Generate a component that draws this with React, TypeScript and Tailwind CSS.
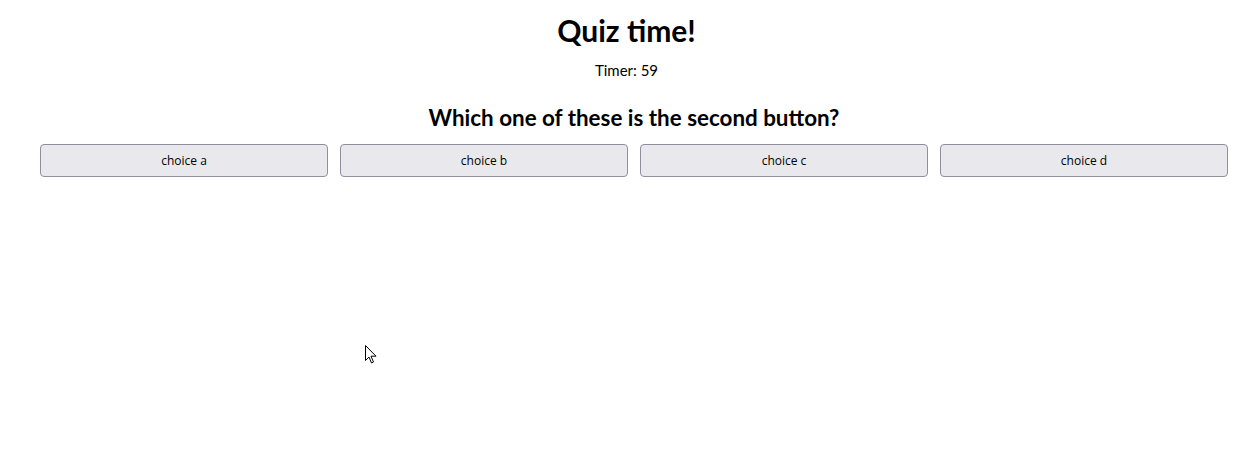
export default function App() {
  const choices = ['choice a', 'choice b', 'choice c', 'choice d'];

  return (
    <main className="relative min-h-[462px] bg-white text-black" style={{ fontFamily: 'Lato, "Open Sans", sans-serif' }}>
      <div className="flex flex-col items-center pt-[10px]">
        <h1 className="text-[30px] leading-[40px] font-bold">Quiz time!</h1>
        <p className="mt-[10px] text-[15px] leading-[20px]">Timer: 59</p>
      </div>
      <section className="pl-[40px] pr-[25px] mt-[23px]">
        <h2 className="text-center text-[22.4px] leading-[30px] font-bold">Which one of these is the second button?</h2>
        <div className="grid grid-cols-4 gap-[12px] mt-[11px]">
          {choices.map((c) => (
            <button
              key={c}
              type="button"
              className="h-[33px] rounded-[4px] border border-[#8f8f9d] bg-[#e9e9ed] text-[12px] text-black"
              style={{ fontFamily: '"Open Sans", "Noto Sans", sans-serif' }}
            >
              {c}
            </button>
          ))}
        </div>
      </section>
      <svg className="absolute left-[365px] top-[345px]" width="12" height="19" viewBox="0 0 12 19">
        <path d="M0.5 0.5 L0.5 15.5 L4 12 L6.5 18 L8.5 17 L6 11.2 L11 11.2 Z" fill="white" stroke="black" strokeWidth="1" strokeLinejoin="miter" />
      </svg>
    </main>
  );
}
